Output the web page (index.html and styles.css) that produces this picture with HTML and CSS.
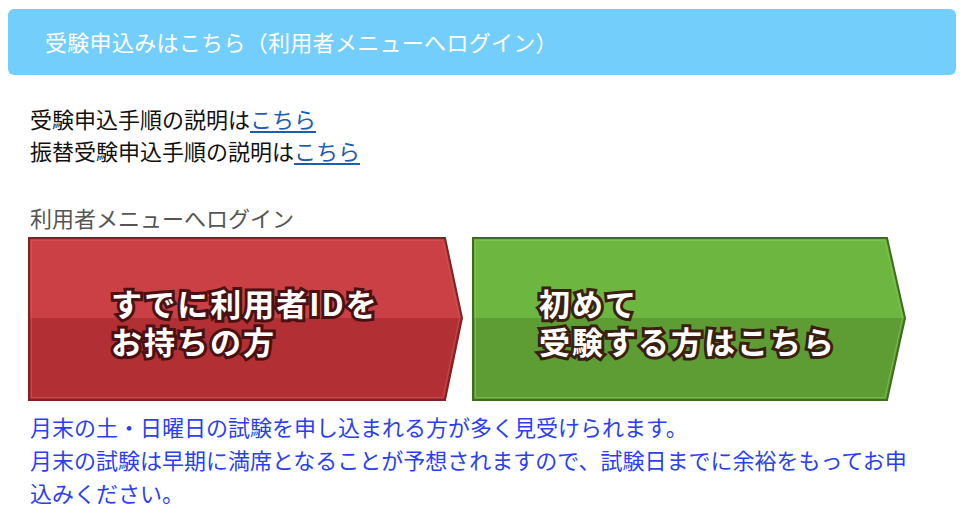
FILE: index.html
```html
<!DOCTYPE html>
<html lang="ja">
<head>
<meta charset="utf-8">
<title>受験申込み</title>
<link rel="stylesheet" href="styles.css">
</head>
<body>
<div class="header">受験申込みはこちら（利用者メニューへログイン）</div>
<div class="content">
  <div class="guide">
    <p>受験申込手順の説明は<a href="#">こちら</a></p>
    <p>振替受験申込手順の説明は<a href="#">こちら</a></p>
  </div>
  <div class="label">利用者メニューへログイン</div>
  <div class="buttons">
    <a class="btn btn-red" href="#">
      <svg class="btn-bg" viewBox="0 0 435 164" preserveAspectRatio="none">
        <polygon points="1,1 417,1 434,81 417,163 1,163" fill="#b22f33"/>
        <polygon points="1,1 417,1 434,81 1,81" fill="#cb4044"/>
        <polygon points="3.5,3.5 415,3.5 431.5,81 415,160.5 3.5,160.5" fill="none" stroke="#d9585b" stroke-width="1" opacity="0.6"/>
        <polygon points="1,1 417,1 434,81 417,163 1,163" fill="none" stroke="#7e2225" stroke-width="2"/>
      </svg>
      <span class="btn-text">すでに利用者IDを<br>お持ちの方</span>
    </a>
    <a class="btn btn-green" href="#">
      <svg class="btn-bg" viewBox="0 0 435 164" preserveAspectRatio="none">
        <polygon points="1,1 415,1 433,81 415,163 1,163" fill="#5e9d34"/>
        <polygon points="1,1 415,1 433,81 1,81" fill="#6db740"/>
        <polygon points="3.5,3.5 413,3.5 430.5,81 413,160.5 3.5,160.5" fill="none" stroke="#7fca4f" stroke-width="1" opacity="0.7"/>
        <polygon points="1,1 415,1 433,81 415,163 1,163" fill="none" stroke="#3f6b22" stroke-width="2"/>
      </svg>
      <span class="btn-text">初めて<br>受験する方はこちら</span>
    </a>
  </div>
  <div class="notice">
    <p>月末の土・日曜日の試験を申し込まれる方が多く見受けられます。</p>
    <p>月末の試験は早期に満席となることが予想されますので、試験日までに余裕をもってお申込みください。</p>
  </div>
</div>
</body>
</html>
```
FILE: styles.css
```css
* { box-sizing: border-box; }
body {
  margin: 0;
  background: #fff;
  font-family: "Noto Sans CJK JP", "Noto Sans", sans-serif;
  color: #111;
}
p { margin: 0; }
.header {
  margin: 9px 8px 0;
  height: 66px;
  background: #74cefb;
  border-radius: 6px;
  color: #fff;
  font-size: 22px;
  letter-spacing: 0.3px;
  display: flex;
  align-items: center;
  padding-left: 37px;
  padding-bottom: 2px;
}
.content {
  padding-left: 30px;
  width: 920px;
}
.guide {
  margin-top: 27px;
  font-size: 22px;
  line-height: 32px;
}
.guide a {
  color: #1c5fb0;
  text-decoration: underline;
  text-underline-offset: 3px;
}
.label {
  margin-top: 35px;
  font-size: 22px;
  line-height: 32px;
  color: #555;
}
.buttons {
  display: flex;
  gap: 9px;
  margin-top: 4px;
  margin-left: -2px;
}
.btn {
  position: relative;
  display: flex;
  align-items: center;
  width: 435px;
  height: 164px;
  text-decoration: none;
}
.btn-bg {
  position: absolute;
  left: 0;
  top: 0;
  width: 100%;
  height: 100%;
}
.btn-text {
  position: relative;
  font-weight: 700;
  font-size: 31px;
  line-height: 38px;
  color: #fff;
  paint-order: stroke fill;
  -webkit-text-stroke: 6px #4a1012;
  padding-top: 5px;
  letter-spacing: 2px;
}
.btn-red .btn-text { padding-left: 83px; }
.btn-green .btn-text {
  padding-left: 67px;
  -webkit-text-stroke-color: #3a2010;
}
.notice {
  margin-top: 9px;
  font-size: 22px;
  line-height: 33px;
  color: #2b3ff2;
  width: 895px;
}
```
